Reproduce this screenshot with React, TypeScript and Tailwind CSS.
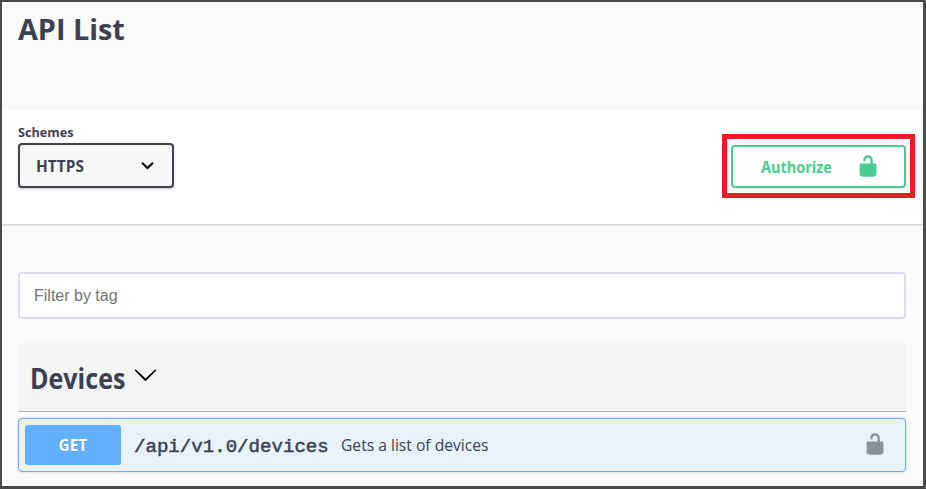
import React from "react";

const UNLOCKED =
  "M15.8 8H14V5.6C14 2.703 12.665 1 10 1 7.334 1 6 2.703 6 5.6V6h2v-.801C8 3.754 8.797 3 10 3c1.203 0 2 .754 2 2.199V8H4c-.553 0-1 .646-1 1.199V17c0 .549.428 1.139.951 1.307l1.197.387C5.672 18.861 6.55 19 7.1 19h5.8c.549 0 1.428-.139 1.951-.307l1.196-.387c.524-.167.953-.757.953-1.306V9.199C17 8.646 16.352 8 15.8 8z";

function Unlocked({ className }: { className: string }) {
  return (
    <svg viewBox="0 0 20 20" className={`h-6 w-6 shrink-0 ${className}`} fill="currentColor">
      <path d={UNLOCKED} />
    </svg>
  );
}

function Header() {
  return (
    <header className="h-[107px] shrink-0 pt-[8px] pl-4">
      <h1 className="text-[28.8px] leading-[38px] font-bold">API List</h1>
    </header>
  );
}

function SchemeBar() {
  return (
    <section className="flex h-[115px] shrink-0 justify-between bg-white pr-2 pl-4 shadow-[0_1px_2px_0_rgba(0,0,0,0.2)]">
      <div className="flex flex-col pt-[14px]">
        <label className="h-5 origin-left scale-x-[0.975] text-[13px] leading-[19px] font-bold">Schemes</label>
        <button className="flex h-[45px] w-[156px] items-center justify-between rounded-[4px] border-2 border-[#41444e] bg-[#f7f7f7] pr-[12px] pl-4 shadow-[0_1px_2px_0_rgba(0,0,0,0.25)]">
          <span className="origin-left scale-x-[0.965] text-[16px] leading-6 font-bold">HTTPS</span>
          <svg viewBox="0 0 20 20" className="h-[25px] w-[25px]" fill="#111">
            <path
              stroke="#111"
              strokeWidth="0.4"
              d="M13.418 7.859c.271-.268.709-.268.978 0 .27.268.272.701 0 .969l-3.908 3.83c-.27.268-.707.268-.979 0l-3.908-3.83c-.27-.267-.27-.701 0-.969.271-.268.709-.268.978 0L10 11l3.418-3.141z"
            />
          </svg>
        </button>
      </div>
      <div className="mt-[25px] h-[64px] w-[193px] border-5 border-[#ed1c24] px-1 py-[6px]">
        <button className="flex h-[43px] w-[175px] items-center rounded-[4px] border-2 border-[#49cc90] pl-[28px] text-[#49cc90] shadow-[0_1px_2px_0_rgba(0,0,0,0.1)]">
          <span className="w-[94.5px] origin-left scale-x-[0.905] text-left text-[16px] leading-6 font-bold">Authorize</span>
          <Unlocked className="relative -top-px" />
        </button>
      </div>
    </section>
  );
}

function Operation() {
  return (
    <div className="mt-[6px] flex h-[54px] items-center rounded-[4px] border border-[#61affe] bg-[#e9f1f9] pr-[18px] pl-[6px] shadow-[0_0_3px_0_rgba(0,0,0,0.19)]">
      <span className="flex h-10 w-24 shrink-0 items-center justify-center rounded-[3px] bg-[#61affe] text-[16px] font-bold text-white [text-shadow:0_1px_0_rgba(0,0,0,0.1)]">
        <span className="scale-x-[0.96]">GET</span>
      </span>
      <code className="mt-[3px] ml-[13px] w-[207px] font-['Liberation_Mono',monospace] text-[19.1px] leading-6 [-webkit-text-stroke:0.5px_#3b4151]">
        /api/v1.0/devices
      </code>
      <span className="flex-1 origin-left scale-x-[0.977] text-[16px] leading-6 whitespace-nowrap">
        Gets a list of devices
      </span>
      <Unlocked className="relative -top-px text-[#8c9196]" />
    </div>
  );
}

export default function App() {
  return (
    <div className="flex h-[489px] w-[926px] flex-col overflow-hidden border-t-2 border-r-3 border-b-3 border-l-2 border-[#4a4a4a] bg-[#fafafa] font-['Open_Sans',sans-serif] text-[#3b4151]">
      <Header />
      <SchemeBar />
      <main className="pt-12 pr-[17px] pl-4">
        <input
          placeholder="Filter by tag"
          className="block h-[47px] w-full rounded-[4px] border-2 border-[#d8dde7] bg-white px-[14px] font-['Liberation_Sans',sans-serif] text-[16px] placeholder:text-[#757575]"
        />
        <div className="mt-6 flex h-[69px] items-center border-b border-[#b4b5b5] bg-[#f4f4f4] pl-3">
          <h2 className="mt-[2px] w-[102.5px] origin-left scale-x-[0.895] text-[28px] leading-8 font-bold">Devices</h2>
          <svg viewBox="0 0 20 20" className="relative -top-[2.5px] h-[25px] w-[25px]" fill="#000">
            <path d="M17.418 6.109c.272-.268.709-.268.979 0s.271.701 0 .969l-7.908 7.83c-.27.268-.707.268-.979 0l-7.908-7.83c-.27-.268-.27-.701 0-.969.271-.268.709-.268.979 0L10 13.25l7.418-7.141z" />
          </svg>
        </div>
        <Operation />
      </main>
    </div>
  );
}
